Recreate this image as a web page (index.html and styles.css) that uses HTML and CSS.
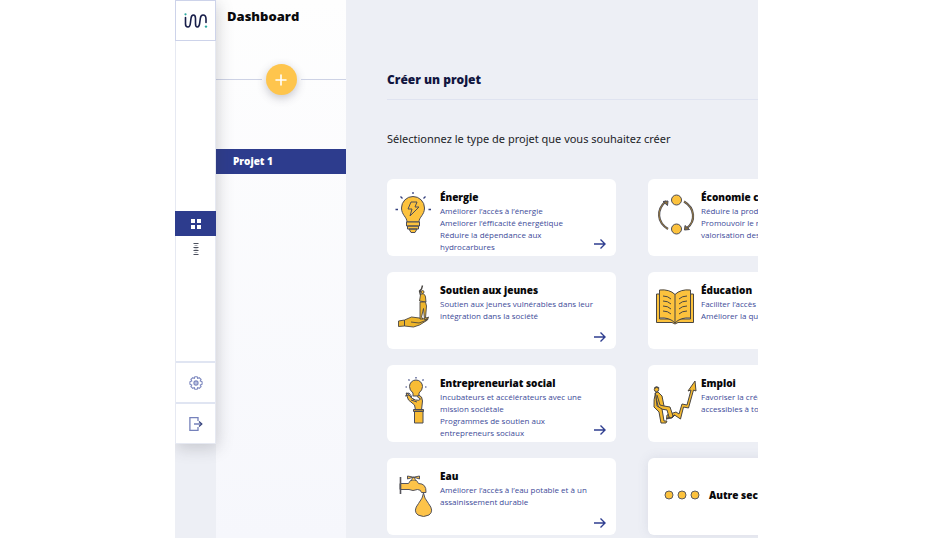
FILE: index.html
```html
<!DOCTYPE html>
<html lang="fr">
<head>
<meta charset="utf-8">
<meta name="viewport" content="width=device-width, initial-scale=1">
<title>Dashboard</title>
<link rel="stylesheet" href="styles.css">
</head>
<body>
<div class="app">
  <div class="side">
  <nav class="rail" aria-label="Navigation principale">
    <a class="rail-logo" href="#" aria-label="Accueil">
      <svg width="24" height="16" viewBox="0 0 24 16" fill="none" stroke="#171d49" stroke-width="1.6" stroke-linecap="round">
        <path d="M1.5 4.5V11Q1.5 14 4 14Q6 14 6.4 10L7 5.5Q7.4 2 9.4 2Q11.5 2 11.5 5.5V10.5Q11.5 14 13.4 14Q15.3 14 15.7 10L16.3 5.5Q16.8 2 19 2Q22 2 22 6V9.5"/>
        <circle cx="1.5" cy="1.3" r="1.1" fill="#2ba79f" stroke="none"/>
        <circle cx="22" cy="13.6" r="1.2" fill="#2ba79f" stroke="none"/>
      </svg>
    </a>
    <div class="rail-menu">
      <a class="rail-item active" href="#" aria-label="Tableau de bord">
        <svg width="12" height="12" viewBox="0 0 12 12" fill="#fff"><path d="M1 1h4v4H1zM7 1h4v4H7zM1 7h4v4H1zM7 7h4v4H7z"/></svg>
      </a>
      <a class="rail-item" href="#" aria-label="Étapes">
        <svg width="8" height="12" viewBox="0 0 8 12" fill="none" stroke="#4b4f5c" stroke-width="1"><path d="M1.5 .5h5M1.5 4.5h5M1.5 7.5h5M1.5 11.5h5"/><path d="M2.5 2.5h3M2.5 6h3M2.5 9.5h3" stroke="#a5a8b1"/></svg>
      </a>
    </div>
    <a class="rail-foot" href="#" aria-label="Paramètres">
      <svg width="14" height="14" viewBox="0 0 14 14" fill="none" stroke="#7d88bf" stroke-width="1.1" stroke-linejoin="round">
        <path d="M5.7 .8h2.6l.4 1.7 1.5-.9 1.9 1.9-.9 1.6 1.9.6v2.6l-1.9.6.9 1.6-1.9 1.9-1.5-.9-.4 1.7H5.7l-.4-1.7-1.5.9-1.9-1.9.9-1.6-1.9-.6V5.7l1.9-.6-.9-1.6 1.9-1.9 1.5.9z"/>
        <circle cx="7" cy="7" r="2.1" fill="#b9c0df"/>
      </svg>
    </a>
    <a class="rail-foot" href="#" aria-label="Déconnexion">
      <svg width="14" height="14" viewBox="0 0 14 14" fill="none" stroke="#7581bb" stroke-width="1.3">
        <path d="M9 4V.7H.9v12.600H9V10M5 7h7.500"/><path d="M10 4.500L12.800 7 10 9.500" stroke="#3b477f"/>
      </svg>
    </a>
  </nav>
  </div>

  <aside class="panel">
    <h1>Dashboard</h1>
    <div class="add-row"><button type="button" aria-label="Ajouter un projet">
      <svg width="12" height="12" viewBox="0 0 12 12" stroke="#fff" stroke-width="1.6" stroke-linecap="round"><path d="M6 1v10M1 6h10"/></svg>
    </button></div>
    <a class="project" href="#">Projet 1</a>
  </aside>

  <main>
    <h2>Créer un projet</h2>
    <p class="intro">Sélectionnez le type de projet que vous souhaitez créer</p>
    <div class="cards">
      <a class="card" href="#">
        <svg class="pic" viewBox="0 0 44 48" fill="none" stroke="#4b4c58" stroke-width="1" stroke-linejoin="round">
          <path d="M16 30C16 25 10.500 23 10.500 16A11.500 11.500 0 0 1 33.500 16C33.500 23 28 25 28 30z" fill="#fcc23d"/>
          <path d="M15.500 30h13v4h-13zM16.500 34h11v3h-11zM18 37h8l-2 3.500h-4z" fill="#fcc23d"/>
          <path d="M20 10h6l-2 5h4l-9 9 2-7h-4z"/>
          <path d="M22 0v2M9.500 4.500l2 2M34.500 4.500l-2 2M4.500 17.500h2.500M37.500 17.500H40" stroke="#35417f" stroke-width="1.3"/>
        </svg>
        <div class="text"><h3>Énergie</h3><p>Améliorer l’accès à l’énergie<br>Ameliorer l’éfficacité énergétique<br>Réduire la dépendance aux<br>hydrocarbures</p></div>
        <svg class="arrow" viewBox="0 0 14 12"><path d="M1 6h11M7.500 1.500L12 6l-4.500 4.500"/></svg>
      </a>
      <a class="card" href="#">
        <svg class="pic" viewBox="0 0 44 48" fill="#fcc23d" stroke="#4b4c58" stroke-width="1" stroke-linejoin="round">
          <path d="M16 37C5 30 4 18 14 9" fill="none" stroke-width="2.2"/>
          <path d="M16 37C5 30 4 18 14 9" fill="none" stroke="#b38a38" stroke-width=".8"/>
          <path d="M32 9.500C43 16 44 29 35 36" fill="none" stroke-width="2.2"/>
          <path d="M32 9.500C43 16 44 29 35 36" fill="none" stroke="#b38a38" stroke-width=".8"/>
          <path d="M11 9.500l5-.5-.5 4.500zM37.500 37.500l-5 .5.500-4.500z" fill="#8c7039"/>
          <circle cx="24.500" cy="8" r="5"/><circle cx="24.500" cy="37" r="5"/>
        </svg>
        <div class="text"><h3>Économie circulaire</h3><p>Réduire la production de déchets<br>Promouvoir le recyclage et la<br>valorisation des déchets</p></div>
      </a>
      <a class="card" href="#">
        <svg class="pic" viewBox="0 0 44 48" fill="#eeb52b" stroke="#494643" stroke-width=".9" stroke-linejoin="round">
          <path d="M7.500 36l6-1v6l-6 .5zM13.500 35l7-3 8 1 5 1 4-2-1 3-8 5-6 2-9-1z"/><path d="M20 37l8 1 8-3" fill="none"/>
          <path d="M28.500 16l1-6q1-2 3-1 2 1 2 3l.5 5z"/>
          <path d="M29 17h5.500l1 4-1 12h1.500l.5 1.500h-3l-1-11-2 8.500 1.500 2h-3z"/>
          <path d="M29.500 10l-1-4 2-2 1-3.500M29.500 6l2 2" fill="none" stroke-width="1.4"/>
          <circle cx="31.500" cy="7" r="1.500"/>
        </svg>
        <div class="text"><h3>Soutien aux jeunes</h3><p>Soutien aux jeunes vulnérables dans leur<br>intégration dans la société</p></div>
        <svg class="arrow" viewBox="0 0 14 12"><path d="M1 6h11M7.500 1.500L12 6l-4.500 4.500"/></svg>
      </a>
      <a class="card" href="#">
        <svg class="pic" viewBox="0 0 44 48" fill="#fcc23d" stroke="#494643" stroke-width="1" stroke-linejoin="round">
          <path d="M4.500 9h3v25H20l3 1.500 3-1.500h12.500V9h3v28.500H26L23 39l-3-1.500H4.500z"/>
          <path d="M7.500 5q10-1 15.500 4.500 5.500-5.500 15.500-4.500v28q-10-1-15.500 5-5.500-6-15.500-5zM23 9.500V38"/>
          <path d="M11 11q5 0 8 3M11 16q5 0 8 3M11 21q5 0 8 3M11 26q5 0 8 3M35 11q-5 0-8 3M35 16q-5 0-8 3M35 21q-5 0-8 3M35 26q-5 0-8 3" fill="none"/>
        </svg>
        <div class="text"><h3>Éducation</h3><p>Faciliter l’accès à l’éducation<br>Améliorer la qualité de l’enseignement</p></div>
      </a>
      <a class="card" href="#">
        <svg class="pic" viewBox="0 0 44 48" fill="#f8bc35" stroke="#494b56" stroke-width="1" stroke-linejoin="round">
          <path d="M22 18v-3q-3.500-3-3.500-6.500a6.500 6.500 0 0 1 13 0q0 3.500-3.500 6.500v3z"/>
          <path d="M24.500 32l-1-5-6-5-2-5q-1-3 1-2l4 5 4 2q4 1 5-1l-3-2 1-2q4 1 4 6l-1 9z"/>
          <path d="M15 16l3-1 3 4M14 18l4-1 5 5M20 22l6 2" fill="none"/>
          <path d="M23.500 33H32v12h-8.500zM22.500 31.500h10v2h-10z"/>
          <path d="M25 -1v1.500M17.500 1.500l1 1M32.500 1.500l-1 1M14.500 9H16M34 9h1.500" stroke="#35417f" stroke-width="1.2"/>
        </svg>
        <div class="text"><h3>Entrepreneuriat social</h3><p>Incubateurs et accélérateurs avec une<br>mission sociétale<br>Programmes de soutien aux<br>entrepreneurs sociaux</p></div>
        <svg class="arrow" viewBox="0 0 14 12"><path d="M1 6h11M7.500 1.500L12 6l-4.500 4.500"/></svg>
      </a>
      <a class="card" href="#">
        <svg class="pic" viewBox="0 0 44 48" fill="#f4b92f" stroke="#494643" stroke-width="1" stroke-linejoin="round">
          <path d="M15 37l9-3 3 2 3-10 5 1 4-15-3 1 7-10 1 10-2.500-1-5 18-5-1-3 12-6-4-8 4z"/>
          <path d="M3 15l3-1 4 4 2 10 6 1 3 9-2 2-2-1-2-7-6-1-3-3z"/>
          <path d="M5 28l5 3 2 12h3l-1 2H9L7 34 2 29q-.5-8 1.500-14z"/>
          <path d="M5 17l3 10 4 1M17 39l-3 2 6-1 3-3" fill="none"/>
          <circle cx="4.500" cy="11.500" r="2.200"/><path d="M2.500 10.500q2-3 4.500 0" stroke-width="1.5"/>
        </svg>
        <div class="text"><h3>Emploi</h3><p>Favoriser la création d’emplois<br>accessibles à tous</p></div>
      </a>
      <a class="card" href="#">
        <svg class="pic" viewBox="0 0 44 48" fill="#fdc349" stroke="#55545b" stroke-width="1" stroke-linejoin="round">
          <path d="M9 12.500h8.500l2-3h6l2 3q8 0 7.500 9h-4.500q-.5-3-4-3l-4.500 1-4-1H9z"/>
          <path d="M20.500 9.500l1-3h2l1 3M21 6.500l-4.500 1.500V5l5 1h2l5-1v3L24 6.500z"/>
          <path d="M9.500 6v17" stroke-width="1.6"/>
          <path d="M32.500 22q-.5 5-5 10.500-6 7.500-.5 11.500 5.500 3 11 0 5.500-4-.5-11.500-4.500-5.500-5-10.500z"/>
        </svg>
        <div class="text"><h3>Eau</h3><p>Améliorer l’accès à l’eau potable et à un<br>assainissement durable</p></div>
        <svg class="arrow" viewBox="0 0 14 12"><path d="M1 6h11M7.500 1.500L12 6l-4.500 4.500"/></svg>
      </a>
      <a class="card other" href="#">
        <svg width="36" height="10" viewBox="0 0 36 10" fill="#fcc23d" stroke="#5b5a5f" stroke-width="1"><circle cx="5" cy="5" r="4"/><circle cx="18" cy="5" r="4"/><circle cx="31" cy="5" r="4"/></svg>
        <h3>Autre secteur</h3>
      </a>
    </div>
  </main>
</div>
</body>
</html>
```
FILE: styles.css
```css
* { box-sizing: border-box; }

body {
  margin: 0;
  background: #fff;
  display: grid;
  grid-template-columns: 175fr 583fr 184fr;
  font-family: "Open Sans", "Noto Sans", sans-serif;
}

h1, h2, h3, p { margin: 0; }
a { color: inherit; text-decoration: none; }
svg { display: block; flex: none; }

.app {
  grid-column: 2;
  display: grid;
  grid-template-columns: 41px 130px minmax(0, 1fr);
  height: 100vh;
  overflow: hidden;
  background: #edeff5;
}

.side { position: relative; z-index: 1; }

.rail {
  display: flex;
  flex-direction: column;
  background: #fff;
  border: 1px solid #e6e9f2;
  border-top: 0;
  box-shadow: 2px 4px 16px rgba(60, 60, 70, .22);
}

.rail a { display: flex; align-items: center; justify-content: center; }
.rail-logo { height: 41px; border: 1px solid #cdd3ea; margin: 0 -1px; }
.rail-menu { padding: 170px 0 100px; margin: 0 -1px; }
.rail-item { height: 25px; }
.rail-item.active { background: #2d3c8d; }
.rail-foot { height: 41px; border-top: 2px solid #e0e5f2; }

.panel {
  background: linear-gradient(#fefefe, #f6f7fc);
  display: flex;
  flex-direction: column;
}

.panel h1 {
  padding: 6px 0 0 11px;
  font-size: 13px;
  line-height: 20px;
  font-weight: 800;
  color: #0a0a0c;
}

.add-row {
  display: flex;
  align-items: center;
  gap: 4px;
  margin: 38px 0 54px;
}

.add-row::before, .add-row::after {
  content: "";
  flex: 1;
  height: 1px;
  background: #cdd2e5;
}

.add-row button {
  display: flex;
  align-items: center;
  justify-content: center;
  width: 31px;
  height: 31px;
  padding: 0;
  border: 0;
  border-radius: 50%;
  background: #fec54d;
  box-shadow: 0 3px 10px rgba(70, 70, 90, .3);
}

.project {
  background: #2d3c8d;
  color: #fff;
  font-size: 10px;
  line-height: 25px;
  font-weight: 800;
  padding-left: 17px;
}

main { padding: 70px 0 0 41px; overflow: hidden; }

h2 {
  font-size: 12px;
  line-height: 20px;
  font-weight: 800;
  color: #11153f;
  padding-bottom: 9px;
  border-bottom: 1px solid #dfe3f0;
}

.intro {
  margin: 29px 0 30px;
  font-family: "Noto Sans", sans-serif;
  font-size: 11px;
  line-height: 20px;
  color: #222327;
  white-space: nowrap;
}

.cards {
  display: grid;
  grid-template-columns: repeat(2, 229px);
  grid-auto-rows: 77px;
  gap: 16px 32px;
}

.card {
  display: flex;
  align-items: flex-start;
  gap: 5px;
  padding: 10px 9px 0 4px;
  border-radius: 6px;
  background: #fff;
}

.pic { width: 44px; height: 48px; margin-top: 3px; overflow: visible; }

.text { flex: 1; min-width: 0; white-space: nowrap; }

.card h3 {
  font-size: 10px;
  line-height: 16px;
  font-weight: 800;
  color: #08080a;
  white-space: nowrap;
}

.card p { font-size: 8px; line-height: 12px; color: #3d4a98; }

.arrow {
  width: 14px;
  height: 12px;
  align-self: flex-end;
  margin: 0 0 6px -19px;
  fill: none;
  stroke: #2f3e90;
  stroke-width: 1.4;
}

.other {
  align-items: center;
  gap: 9px;
  padding: 0 16px 4px;
  box-shadow: 0 0 12px rgba(90, 100, 130, .12);
}
```
